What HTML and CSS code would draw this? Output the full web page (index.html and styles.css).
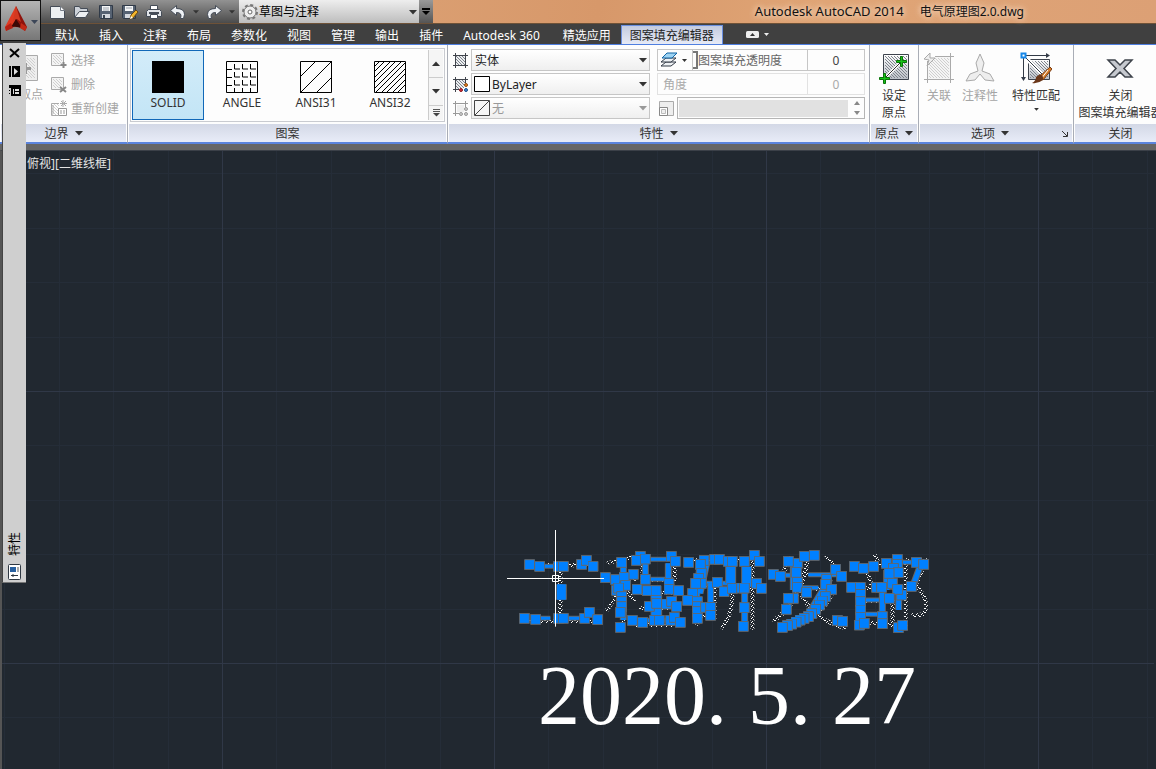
FILE: index.html
```html
<!DOCTYPE html>
<html lang="zh-CN">

<head>
    <meta charset="utf-8">
    <meta name="viewport" content="width=device-width, initial-scale=1.0">
    <title>Autodesk AutoCAD 2014 - 电气原理图2.0.dwg</title>
    <link rel="stylesheet" href="styles.css">
</head>

<body>
    <!-- shared hatch fills and symbols -->
    <svg class="defs" width="0" height="0" aria-hidden="true">
        <defs>
            <pattern id="hatch" width="3" height="3" patternUnits="userSpaceOnUse">
                <path d="M0 0l3 3" stroke="#7d838c" stroke-width="1" />
            </pattern>
            <pattern id="hatchLight" width="3" height="3" patternUnits="userSpaceOnUse">
                <path d="M0 0l3 3" stroke="#cfcfcf" stroke-width="1" />
            </pattern>
            <linearGradient id="steel" x1="0" y1="0" x2="0" y2="1">
                <stop offset="0" stop-color="#ffffff" />
                <stop offset="1" stop-color="#b9bec6" />
            </linearGradient>
        </defs>
        <symbol id="frame" viewBox="0 0 17 17">
            <path d="M3 3h11v11H3z" fill="#eceef0" />
            <path d="M3 3h11v11H3z" fill="url(#hatch)" />
            <path d="M3.500 1v15M13.500 1v15M1 3.500h15M1 13.500h15" stroke="#40444c" fill="none" />
        </symbol>
        <symbol id="caret" viewBox="0 0 8 5">
            <path d="M0 0h8L4 4.500z" fill="currentColor" />
        </symbol>
    </svg>

    <header class="top">
        <button class="app" aria-label="应用程序菜单">
            <svg width="38" height="36" viewBox="0 0 38 36">
                <path d="M15 3L4 24l1 4q5-4 10-4l1-8z" fill="#e03a22" />
                <path d="M15 3L26 24l-2 4q-4-4-9-4l-1-7z" fill="#8f130c" />
                <path d="M15 3l-3 15 4-2 4 3z" fill="#d33920" />
                <path d="M15 16l-5 8q5-1 11 1z" fill="#3c0806" />
                <path d="M4 24l6-4 2 5-7 3z" fill="#b42013" />
                <path d="M26 24l-6-4-1 5 5 3z" fill="#c22a17" />
                <path d="M30 17h7l-3.500 4z" fill="#3c4658" />
            </svg>
        </button>
        <div class="titlebar">
            <div class="qat">
                <button aria-label="新建"><svg width="18" height="16" viewBox="0 0 18 16"><path d="M1.500 2.500h10l4 4v8h-14z" fill="#eceff2" stroke="#454c57"/><path d="M11.500 2.500v4h4" fill="#fff" stroke="#747b86"/></svg></button>
                <button aria-label="打开"><svg width="18" height="16" viewBox="0 0 18 16"><path d="M1.500 13.500v-11h5l1 2h7v3" fill="#cdd2d9" stroke="#454c57"/><path d="M1.500 13.500l5-6h10l-4 6z" fill="#eef0f3" stroke="#454c57"/></svg></button>
                <button aria-label="保存"><svg width="18" height="16" viewBox="0 0 18 16"><path d="M2.500 1.500h13v13h-12l-1-1z" fill="#566272" stroke="#303a48"/><path d="M5 2h8v5H5z" fill="#f5f6f7"/><path d="M6 4h6M6 6h6" stroke="#9ba2ac"/><path d="M5 10h8v4H5z" fill="#d4d8de"/><path d="M6 11h2v3H6z" fill="#38434f"/></svg></button>
                <button aria-label="另存为"><svg width="18" height="16" viewBox="0 0 18 16"><path d="M1.500 1.500h13v13h-12l-1-1z" fill="#566272" stroke="#303a48"/><path d="M4 2h8v5H4z" fill="#f5f6f7"/><path d="M5 4h6" stroke="#9ba2ac"/><path d="M4 10h8v4H4z" fill="#d4d8de"/><path d="M9 15l1-4 5-5 2 2-5 6z" fill="#f2b52c" stroke="#704c13"/><path d="M9 15l1-3 2 2z" fill="#fff"/></svg></button>
                <button aria-label="打印"><svg width="18" height="16" viewBox="0 0 18 16"><path d="M5.500 6V1.500h7V6" fill="#fff" stroke="#454c57"/><path d="M3.500 5.500h11l2 2v5h-15v-5z" fill="#e1e4e8" stroke="#454c57"/><path d="M4 9h10" stroke="#454c57" stroke-width="2"/><path d="M5.500 10.500h7v4h-7z" fill="#fff" stroke="#454c57"/></svg></button>
                <button aria-label="放弃"><svg width="18" height="16" viewBox="0 0 18 16"><path d="M1.500 6.500l6-5v3q8 0 8 6l-1 4h-3q2-6-4-6v3z" fill="#eef1f5" stroke="#454c57"/></svg></button>
                <svg class="mini" width="6" height="4"><use href="#caret" /></svg>
                <button aria-label="重做"><svg width="18" height="16" viewBox="0 0 18 16"><path d="M16.500 6.500l-6-5v3q-8 0-8 6l1 4h3q-2-6 4-6v3z" fill="#eef1f5" stroke="#454c57"/></svg></button>
                <svg class="mini" width="6" height="4"><use href="#caret" /></svg>
            </div>
            <div class="workspace">
                <svg width="18" height="18" viewBox="0 0 18 18">
                    <circle cx="9" cy="9" r="7" fill="none" stroke="#777" stroke-width="2" stroke-dasharray="3 2.500" />
                    <circle cx="9" cy="9" r="6" fill="#ededed" stroke="#777" />
                    <circle cx="9" cy="9" r="2" fill="#fff" stroke="#666" />
                </svg>
                <label class="name" for="space">工作空间</label>
                <select id="space"><option>草图与注释</option></select>
                <svg class="arrow" width="8" height="5"><use href="#caret" /></svg>
            </div>
            <button class="more" aria-label="自定义快速访问工具栏"><svg width="8" height="8" viewBox="0 0 8 8"><path d="M0 1h8" stroke="#000" stroke-width="2"/><path d="M0 3h8L4 7z"/></svg></button>
            <div class="title"><span>Autodesk AutoCAD 2014</span><span>电气原理图2.0.dwg</span></div>
        </div>
        <nav class="tabs">
            <a href="#">默认</a>
            <a href="#">插入</a>
            <a href="#">注释</a>
            <a href="#">布局</a>
            <a href="#">参数化</a>
            <a href="#">视图</a>
            <a href="#">管理</a>
            <a href="#">输出</a>
            <a href="#">插件</a>
            <a class="latin" href="#">Autodesk 360</a>
            <a href="#">精选应用</a>
            <a class="active" href="#">图案填充编辑器</a>
            <button class="minimize" aria-label="最小化功能区">
                <svg width="24" height="9" viewBox="0 0 24 9"><rect x="1" y="1" width="13" height="7" rx="1.500" fill="#eee"/><path d="M5 6l2.500-3L10 6z" fill="#333"/><path d="M19 3h5l-2.500 3z" fill="#eee"/></svg>
            </button>
        </nav>
    </header>

    <section class="ribbon">
        <div class="panel bounds">
            <div class="tools">
                <button class="big off" disabled>
                    <svg width="28" height="28" viewBox="0 0 28 28"><path d="M1.500 1.500h25v25h-25z" fill="#eee" stroke="#aaa"/><path d="M4 4h20v20H4z" fill="url(#hatchLight)"/><path d="M12 9h4v4h4v3h-4v4h-4v-4H8v-3h4z" fill="#999"/></svg>
                    <span>拾取点</span>
                </button>
                <div class="stack">
                    <button disabled><svg width="17" height="17" viewBox="0 0 17 17"><path d="M1.500 1.500h12v12h-12z" fill="#f4f4f4" stroke="#aaa"/><path d="M3 3h9v9H3z" fill="url(#hatchLight)"/><path d="M13.500 10v6M10.500 13h6" stroke="#888" stroke-width="2"/></svg>选择</button>
                    <button disabled><svg width="17" height="17" viewBox="0 0 17 17"><path d="M1.500 1.500h12v12h-12z" fill="#f4f4f4" stroke="#aaa"/><path d="M3 3h9v9H3z" fill="url(#hatchLight)"/><path d="M10 11l6 5M16 11l-6 5" stroke="#888" stroke-width="2"/></svg>删除</button>
                    <button disabled><svg width="17" height="17" viewBox="0 0 17 17"><path d="M9 3.500H1.500v12H8M3 5v9" fill="url(#hatchLight)" stroke="#aaa"/><path d="M13 0v7M10 3.500h7M11 1l5 5M16 1l-5 5" stroke="#aaa"/><path d="M8.500 8.500h8v7h-8z" fill="#fff" stroke="#999"/><path d="M10 11h2M13 11h2M10 13h2M13 13h2" stroke="#999"/></svg>重新创建</button>
                </div>
            </div>
            <h2>边界 <svg width="8" height="5"><use href="#caret" /></svg></h2>
        </div>

        <div class="panel patterns">
            <div class="gallery">
                <button class="swatch selected"><svg width="32" height="32"><path d="M0 0h32v32H0z" /></svg>SOLID</button>
                <button class="swatch"><svg width="32" height="32" viewBox="0 0 32 32"><path d="M.5 .5h31v31H.5zM8.500 3v5H14M16.500 3v5H22M24.500 3v5H30M1 8.500h5M8.500 11v5H14M16.500 11v5H22M24.500 11v5H30M1 16.500h5M8.500 19v5H14M16.500 19v5H22M24.500 19v5H30M1 24.500h5M8.500 27v4M16.500 27v4M24.500 27v4" fill="none" stroke="#000"/></svg>ANGLE</button>
                <button class="swatch"><svg width="32" height="32" viewBox="0 0 32 32"><path d="M.5 .5h31v31H.5zM0 16L16 0M0 32L32 0M16 32l16-16" fill="none" stroke="#000"/></svg>ANSI31</button>
                <button class="swatch"><svg width="32" height="32" viewBox="0 0 32 32"><path d="M.5 .5h31v31H.5zM0 6l6-6M0 11L11 0M0 17L17 0M0 22L22 0M0 28L28 0M1 32L32 1M7 32L32 7M12 32l20-20M18 32l14-14M23 32l9-9" fill="none" stroke="#000"/></svg>ANSI32</button>
                <div class="scroller">
                    <button aria-label="上一行"><svg class="flip" width="8" height="5"><use href="#caret" /></svg></button>
                    <button aria-label="下一行"><svg width="8" height="5"><use href="#caret" /></svg></button>
                    <button class="last" aria-label="展开"><svg width="7" height="8" viewBox="0 0 7 8"><path d="M0 .5h7M0 2.500h7" stroke="#555"/><path d="M0 4h7L3.500 7.500z" fill="#444"/></svg></button>
                </div>
            </div>
            <h2>图案</h2>
        </div>

        <div class="panel props">
            <div class="fields">
                <svg width="17" height="17"><use href="#frame" /></svg>
                <div class="pick">
                    <select aria-label="图案填充类型"><option>实体</option></select>
                    <svg class="arrow" width="8" height="5"><use href="#caret" /></svg>
                </div>
                <div class="value">
                    <button class="layers" aria-label="透明度"><svg width="28" height="18" viewBox="0 0 28 18"><path d="M1 15l5-4h10l-5 4z" fill="#eef1f4" stroke="#333b47"/><path d="M1 11l5-4h10l-5 4z" fill="#eef1f4" stroke="#333b47"/><path d="M2 7l5-5h10l-5 5z" fill="#9ed4f4" stroke="#1164a5"/><path d="M22 8h5l-2.500 3z" fill="#333"/></svg></button>
                    <i class="thumb"></i>
                    <label for="alpha">图案填充透明度</label>
                    <input id="alpha" value="0">
                </div>

                <svg width="17" height="17" viewBox="0 0 17 17"><use href="#frame" width="17" height="17"/><path d="M12 7h5v10H7v-5h5z" fill="#fff"/><circle cx="14" cy="9" r="1.500" fill="#f08422" stroke="#8b4b12"/><circle cx="9" cy="14" r="1.500" fill="#d9303b" stroke="#86151c"/><circle cx="14" cy="14" r="1.500" fill="#3f8ad8" stroke="#1c4d85"/></svg>
                <div class="pick">
                    <svg class="chip" width="16" height="16"><path d="M.5 .5h15v15H.5z" fill="#fff" stroke="#000"/></svg>
                    <select class="chipped" aria-label="图案填充颜色"><option>ByLayer</option></select>
                    <svg class="arrow" width="8" height="5"><use href="#caret" /></svg>
                </div>
                <div class="value faded">
                    <label class="wide" for="angle">角度</label>
                    <input id="angle" value="0" disabled>
                </div>

                <svg width="17" height="17" viewBox="0 0 17 17"><path d="M3.500 1v15M13.500 1v6M1 3.500h15M1 13.500h6" stroke="#999"/><path d="M5 5h7v7H5z" fill="#eee"/><circle cx="14" cy="9" r="1.500" fill="#ccc" stroke="#999"/><circle cx="9" cy="14" r="1.500" fill="#ccc" stroke="#999"/><circle cx="14" cy="14" r="1.500" fill="#ccc" stroke="#999"/></svg>
                <div class="pick faded">
                    <svg class="chip" width="16" height="16"><path d="M.5 .5h15v15H.5zM1 15L15 1" fill="#f6f6f6" stroke="#444"/></svg>
                    <select class="chipped" aria-label="背景色" disabled><option>无</option></select>
                    <svg class="arrow" width="8" height="5"><use href="#caret" /></svg>
                </div>
                <div class="scale">
                    <svg width="17" height="17" viewBox="0 0 17 17"><path d="M1.500 1.500h14v14h-14z" fill="#eee" stroke="#aaa"/><path d="M1.500 7.500h8v8h-8z" fill="#fff" stroke="#888"/><path d="M3.500 9.500h4v4h-4z" fill="#eee" stroke="#bbb"/></svg>
                    <div class="spin">
                        <input aria-label="填充图案比例" disabled>
                        <svg width="6" height="14" viewBox="0 0 6 14"><path d="M0 4l3-4 3 4zM0 10l3 4 3-4z" fill="#888"/></svg>
                    </div>
                </div>
            </div>
            <h2>特性 <svg width="8" height="5"><use href="#caret" /></svg></h2>
        </div>

        <div class="panel origin">
            <div class="tools">
                <button class="big">
                    <svg width="32" height="32" viewBox="0 0 32 32"><path d="M5.500 2.500h25v25h-25z" fill="url(#steel)" stroke="#3d434d"/><path d="M7 4h22v22H7z" fill="url(#hatch)"/><path d="M8 25L23 10" stroke="#fff" stroke-width="3"/><path d="M8 25L23 10" stroke="#333"/><path d="M22.500 4.500h2v4h4v2h-4v4h-2v-4h-4v-2h4zM5.500 21.500h2v4h4v2h-4v4h-2v-4h-4v-2h4z" fill="#16c216" stroke="#087308"/></svg>
                    <span>设定<br>原点</span>
                </button>
            </div>
            <h2>原点 <svg width="8" height="5"><use href="#caret" /></svg></h2>
        </div>

        <div class="panel options">
            <div class="tools">
                <button class="big off" disabled>
                    <svg width="32" height="32" viewBox="0 0 32 32"><path d="M5 5h22v22H5z" fill="#f5f5f5"/><path d="M6 6h20v20H6z" fill="url(#hatchLight)"/><path d="M4.500 9v22M27.500 1v30M12 4.500h19M1 27.500h30" stroke="#aaa"/><path d="M1 7l6-6v5h5l-8 8 2-6z" fill="#eee" stroke="#aaa"/></svg>
                    <span>关联</span>
                </button>
                <button class="big off" disabled>
                    <svg width="32" height="32" viewBox="0 0 32 32"><path d="M16 2l4 9-2 8 8 3 4 7-9-1-5-6-5 6-9 1 4-7 8-3-2-8z" fill="#eee" stroke="#aaa"/></svg>
                    <span>注释性</span>
                </button>
                <button class="big match">
                    <svg width="32" height="32" viewBox="0 0 32 32"><path d="M8.500 7.500h21v20h-21z" fill="url(#steel)" stroke="#3d434d"/><path d="M10 9h18v17H10z" fill="url(#hatch)"/><path d="M4 4l20 20" stroke="#fff" stroke-width="4"/><path d="M4 4l20 20M3.500 5v23M5 3.500h22" stroke="#333b47"/><path d="M1 25h5l-2.500 4zM26 1v5l4-2.500z" fill="#333b47"/><path d="M1.500 1.500h4v4h-4z" fill="#fff" stroke="#1787e8" stroke-width="2"/><path d="M30 15l2 2-9 11-4-3z" fill="#d57b26" stroke="#7b3d14"/><path d="M28 18l-7 9" stroke="#fff"/><path d="M20 22q4 2 3 6-5 4-11 3 4-2 4-6z" fill="#6b3719"/></svg>
                    <span>特性匹配</span>
                    <svg width="5" height="3"><use href="#caret" /></svg>
                </button>
            </div>
            <h2>选项 <svg width="8" height="5"><use href="#caret" /></svg><svg class="launch" width="6" height="6" viewBox="0 0 6 6"><path d="M0 0l5 5M5.500 1v4.500H1" stroke="#333" fill="none"/></svg></h2>
        </div>

        <div class="panel close">
            <div class="tools">
                <button class="big">
                    <svg width="32" height="32" viewBox="0 0 32 32"><path d="M4 8h7l5 5 5-5h7l-8 8.500 8 8.500h-7l-5-5-5 5H4l8-8.500z" fill="#c6c9cf" stroke="#3e434b" stroke-width="1.500"/></svg>
                    <span>关闭<br>图案填充编辑器</span>
                </button>
            </div>
            <h2>关闭</h2>
        </div>
    </section>

    <main class="canvas">
        <svg class="grid" width="100%" height="100%" aria-hidden="true">
            <defs>
                <pattern id="cells" x="222" y="240" width="272" height="272" patternUnits="userSpaceOnUse">
                    <path d="M54.500 0v272M109.500 0v272M163.500 0v272M218.500 0v272M0 54.500h272M0 109.500h272M0 163.500h272M0 218.500h272" stroke="#252d38" />
                    <path d="M.5 0v272M0 .5h272" stroke="#303847" />
                </pattern>
            </defs>
            <rect width="100%" height="100%" fill="url(#cells)" />
        </svg>
        <p class="view">俯视][二维线框]</p>

        <!-- exploded lettering with its grips selected, 3 units to a pixel -->
        <svg class="lettering" width="440" height="135" viewBox="0 0 1320 405">
            <defs>
                <pattern id="dots" width="15" height="12" patternUnits="userSpaceOnUse">
                    <path d="M0 0h3v3H0zM6 3h3v3H6zM12 0h3v3h-3zM3 6h3v3H3zM9 9h3v3H9z" fill="#fff" />
                </pattern>
                <marker id="grip" markerUnits="userSpaceOnUse" markerWidth="33" markerHeight="33" refX="16.500" refY="16.500">
                    <path d="M1.500 1.500h30v30h-30z" fill="#0080ff" stroke="#666" stroke-width="3" />
                </marker>
                <path id="across" d="M119 139h60M107 295h44M195 295h50M436 118h64M440 178h70M440 301h90M601 190h60M640 190h60M700 205h50M850 166h55M925 164h85M900 203h55M1200 127h50M1090 240h60M1095 283h60M1170 202h40" />
                <path id="down" d="M178 193v46M190 193v46M370 130v170M436 125v50M505 130v50M462 212v100M476 212v100M600 133l-12 110M620 130l-20 90M632 190v76M686 130v60M698 130v60M734 140v60M746 140v60M734 205v120M880 130v80M990 175l-60 100M1262 135l-22 60M1147 210v80M1196 210v60M1160 150v60" />
            </defs>
            <text class="hatched" x="57" y="308" fill="url(#dots)">工程研发部</text>
            <use class="edge" href="#across" />
            <use class="core" href="#across" />
            <use class="edge thick" href="#down" />
            <use class="core thick" href="#down" />
            <g class="grips">
                <path d="M89 134L119 139 175 139 190 139 245 133 259 121 279 139 73 295 107 298 176 295 190 295 254 295 268 277 293 299" />
                <path d="M316 173L347 179 365 127 421 109 409 121 436 117 514 109 526 124 400 163 372 172 436 178 377 196 350 211 356 204 365 230 365 245 365 260 361 277 361 322 411 208 442 212 468 212 507 190 507 208 536 212 448 259 470 250 500 252 515 244 530 260 397 301 428 307 463 301 478 301 512 301 523 292 541 307" />
                <path d="M566 127L612 121 601 133 644 118 658 118 604 160 596 175 604 190 587 190 652 187 672 215 578 220 563 241 592 245 592 260 592 275 592 295 617 262 632 262 632 286 685 124 697 124 733 124 763 106 778 124 697 205 725 204 733 204 770 190 784 205 733 263 730 319" />
                <path d="M820 163L841 169 892 130 865 124 889 157 913 109 943 106 892 187 892 202 920 217 880 235 865 235 859 268 1007 148 1025 169 980 178 977 193 995 208 976 230 967 243 958 255 947 268 935 281 925 290 912 295 900 300 888 306 875 312 862 317 847 322 1012 301 1028 304" />
                <path d="M1063 139L1090 145 1121 139 1055 202 1081 202 1082 223 1082 245 1082 270 1082 292 1078 315 1093 310 1130 202 1145 202 1147 290 1147 311 1159 130 1192 118 1192 133 1180 145 1195 158 1167 160 1177 190 1205 225 1193 208 1168 235 1195 323 1208 316 1249 127 1271 133 1234 199" />
            </g>
            <path d="M166.500 30v290M21 175.500h291M157.500 166.500h18v18h-18z" fill="none" stroke="#fff" stroke-width="3" />
        </svg>
        <p class="date">2020. 5. 27</p>
    </main>

    <aside class="palette">
        <button aria-label="关闭"><svg width="12" height="10" viewBox="0 0 12 10"><path d="M1 1l9 8M10 1L1 9" stroke="#000" stroke-width="2"/></svg></button>
        <button aria-label="自动隐藏"><svg width="11" height="11" viewBox="0 0 11 11"><path d="M0 0h2v11H0zM3 0h8v11H3z"/><path d="M5 2l4 3.500L5 9z" fill="#ddd"/></svg></button>
        <button aria-label="特性菜单"><svg width="12" height="11" viewBox="0 0 12 11"><path d="M0 0h12v11H2V3H0zM0 5h1v1H0zM0 8h1v1H0z"/><path d="M4 4h1v5H4zM6 4h4v2H6zM6 7h4v2H6z" fill="#ddd"/></svg></button>
        <span class="caption">特性</span>
        <svg width="13" height="16" viewBox="0 0 13 16"><rect x=".5" y=".5" width="12" height="15" rx="1" fill="#fff" stroke="#2f3843"/><path d="M2 3h6v5H2z" fill="#2860a0"/><path d="M9 3h2v5H9z" fill="#aaa"/><path d="M3 11.500h7M5 10v3" stroke="#2f3843"/></svg>
    </aside>
</body>

</html>
```
FILE: styles.css
```css
* {
    box-sizing: border-box;
}

html, body {
    height: 100%;
}

body {
    margin: 0;
    display: flex;
    flex-direction: column;
    overflow: hidden;
    position: relative;
    background: #212830;
    color: #333;
    font-family: "Noto Sans", "Noto Sans CJK SC", sans-serif;
    font-size: 12px;
    line-height: 17px;
}

button {
    margin: 0;
    padding: 0;
    border: 0;
    background: none;
    color: inherit;
    font: inherit;
}

svg {
    display: block;
    flex: none;
}

.defs {
    position: absolute;
}

/* title bar and tabs */
.top {
    display: grid;
    grid-template-columns: 41px 1fr;
    grid-template-rows: 24px 20px;
    background: #404040;
}

.app {
    grid-row: 1 / 3;
    height: 41px;
    border: 1px solid #111;
    background: linear-gradient(#b5b5b5, #777);
}

.titlebar {
    display: flex;
    min-width: 0;
    border-bottom: 1px solid #6e5238;
    background: linear-gradient(100deg, #dba073 30%, #d7986a 50%, #e0a576 70%, #dca075);
}

.qat {
    display: flex;
    align-items: center;
    gap: 6px;
    width: 198px;
    padding-left: 8px;
    background: linear-gradient(#929292, #4b4b4b);
}

.qat .mini {
    color: #333;
}

.workspace {
    display: flex;
    align-items: center;
    position: relative;
    width: 180px;
    padding-left: 2px;
    background: linear-gradient(#eee, #bdbdbd);
}

.workspace select {
    flex: 1;
    padding: 0;
    border: 0;
    appearance: none;
    background: none;
    color: #000;
    font: inherit;
}

.name {
    display: none;
}

.arrow {
    position: absolute;
    right: 2px;
    top: 50%;
    margin-top: -2px;
    pointer-events: none;
}

.more {
    display: flex;
    align-items: center;
    justify-content: center;
    width: 14px;
    background: linear-gradient(#999, #555);
}

.title {
    display: flex;
    align-items: center;
    gap: 16px;
    margin-left: auto;
    padding-right: 132px;
    color: #111;
    text-shadow: 0 0 6px #f6dcc6, 0 0 6px #f6dcc6;
    white-space: nowrap;
    font-size: 13px;
}

.title span + span {
    font-size: 12px;
}

.tabs {
    display: flex;
    align-items: end;
    padding-left: 4px;
}

.tabs a {
    padding: 1px 10px 0;
    line-height: 17px;
    color: #fff;
    text-decoration: none;
    white-space: nowrap;
}

.tabs a.latin {
    padding-right: 13px;
}

.tabs a.active {
    padding: 1px 8px 0;
    border: 1px solid #6a8fe0;
    border-bottom: 0;
    background: linear-gradient(#c3cbdf, #e6eaf6);
    color: #222;
}

.minimize {
    margin-left: 22px;
    padding-bottom: 5px;
}

/* ribbon */
.ribbon {
    display: flex;
    height: 106px;
    border-top: 1px solid #4f7fe0;
    border-bottom: 6px solid #666;
    background: #fdfdfd;
    overflow: hidden;
}

.panel {
    display: flex;
    flex-direction: column;
    flex: none;
    border-right: 1px solid #a9adb6;
    border-bottom: 2px solid #5b84dd;
    padding: 0 1px;
}

.panel h2 {
    display: flex;
    align-items: center;
    justify-content: center;
    gap: 6px;
    position: relative;
    height: 18px;
    margin: auto 0 0;
    background: linear-gradient(#d3d8e6, #e8ecf8);
    font-size: 12px;
    font-weight: normal;
}

.tools {
    display: flex;
    padding-top: 7px;
}

.big {
    display: flex;
    flex-direction: column;
    align-items: center;
    white-space: nowrap;
}

.big span {
    margin-top: 3px;
}

.match span {
    margin-bottom: 4px;
}

.off {
    color: #a5a5a5;
}

.bounds {
    width: 128px;
}

.bounds .tools {
    gap: 7px;
    padding-left: 6px;
}

.bounds .big svg {
    margin-top: 2px;
}

.bounds .big span {
    margin-top: 4px;
}

.stack {
    display: flex;
    flex-direction: column;
    gap: 7px;
}

.stack button {
    display: flex;
    gap: 4px;
    color: #a5a5a5;
    white-space: nowrap;
}

.patterns {
    width: 320px;
}

.gallery {
    display: flex;
    gap: 2px;
    height: 74px;
    margin: 3px 1px 0;
    padding: 1px;
    border: 1px solid #c9cbd0;
}

.swatch {
    display: flex;
    flex-direction: column;
    align-items: center;
    gap: 1px;
    width: 72px;
    padding-top: 10px;
    border: 1px solid transparent;
}

.selected {
    border-color: #1168b8;
    background: linear-gradient(#d3ecf9, #c3e5f6);
}

.scroller {
    display: flex;
    flex-direction: column;
    gap: 1px;
    flex: 1;
    padding-left: 1px;
    background: #ccc;
}

.scroller button {
    display: flex;
    align-items: center;
    justify-content: center;
    flex: 2;
    background: #f5f5f5;
}

.scroller .last {
    flex: 1;
}

.flip {
    transform: rotate(180deg);
}

.props {
    width: 422px;
}

.fields {
    display: grid;
    grid-template-columns: 17px 179px 213px;
    grid-template-rows: 22px 22px 22px;
    gap: 2px;
    align-items: center;
    padding: 4px 0 0 3px;
}

.pick {
    position: relative;
    display: flex;
    align-items: center;
    height: 22px;
    border: 1px solid #c6c6c6;
    background: linear-gradient(#fff, #efefef);
}

.pick select {
    width: 100%;
    height: 20px;
    padding: 0 3px;
    border: 0;
    appearance: none;
    background: none;
    color: #222;
    opacity: 1;
    font: inherit;
}

.pick .chipped {
    padding-left: 20px;
}

.chip {
    position: absolute;
    left: 2px;
}

.faded, .pick.faded select {
    color: #999;
}

.value {
    display: flex;
    align-items: center;
    height: 22px;
    margin-left: 5px;
    border: 1px solid #c6c6c6;
}

.value.faded {
    border-color: #e2e2e2;
}

.layers {
    width: 35px;
    height: 20px;
    padding-left: 2px;
    border-right: 1px solid #c6c6c6;
}

.thumb {
    width: 5px;
    height: 18px;
    border: 2px solid #777;
    border-left: 0;
}

.value label {
    flex: 1;
    color: #666;
}

.value .wide {
    padding-left: 5px;
    color: #aaa;
}

.value input {
    width: 57px;
    height: 20px;
    padding: 0;
    border: 0;
    border-left: 1px solid #c6c6c6;
    background: none;
    color: #444;
    font: inherit;
    text-align: center;
}

.value.faded input {
    border-color: #e2e2e2;
    color: #aaa;
}

.scale {
    display: flex;
    align-items: center;
    gap: 2px;
    margin-left: 6px;
}

.spin {
    display: flex;
    align-items: center;
    gap: 6px;
    flex: 1;
    min-width: 0;
    height: 22px;
    padding: 0 4px 0 1px;
    border: 1px solid #b5b5b5;
}

.spin input {
    flex: 1;
    min-width: 0;
    height: 17px;
    border: 0;
    background: #e1e1e1;
}

.origin {
    width: 49px;
}

.origin .tools, .close .tools {
    justify-content: center;
}

.options {
    width: 155px;
}

.options .tools {
    gap: 7px;
    padding-left: 3px;
}

.options .match {
    margin-left: 7px;
}

.options h2 {
    padding-right: 12px;
}

.launch {
    position: absolute;
    right: 4px;
    bottom: 5px;
}

.close {
    width: 94px;
}

/* drawing area */
.canvas {
    position: relative;
    flex: 1;
    min-height: 0;
    overflow: hidden;
    border-left: 2px solid #555;
    border-top: 1px solid #3b4048;
}

.grid {
    position: absolute;
    inset: 0 0 0 -2px;
}

.view {
    margin: 0;
    padding: 4px 0 0 25px;
    position: relative;
    color: #e4e4e4;
}

.lettering {
    position: absolute;
    left: 498px;
    top: 369px;
}

.hatched {
    font-family: "Noto Sans CJK SC", sans-serif;
    font-size: 249px;
    font-weight: 300;
}

.edge {
    fill: none;
    stroke: #666;
    stroke-width: 15px;
}

.core {
    fill: none;
    stroke: #0080ff;
    stroke-width: 9px;
}

.edge.thick {
    stroke-width: 21px;
}

.core.thick {
    stroke-width: 15px;
}

.grips path {
    fill: none;
    marker: url(#grip);
}

.date {
    position: absolute;
    left: 536px;
    top: 500px;
    margin: 0;
    color: #fff;
    font-family: "Liberation Serif", serif;
    font-size: 84px;
    line-height: 90px;
    white-space: nowrap;
}

/* docked properties palette, collapsed over the left edge */
.palette {
    position: absolute;
    left: 2px;
    top: 43px;
    display: flex;
    flex-direction: column;
    align-items: center;
    gap: 8px;
    width: 24px;
    height: 540px;
    padding: 5px 0 2px;
    border-left: 1px solid #444;
    border-bottom: 1px solid #777;
    background: #cfcfcf;
    color: #000;
}

.caption {
    margin-top: auto;
    writing-mode: vertical-rl;
    transform: rotate(180deg);
    text-orientation: sideways;
}
```
